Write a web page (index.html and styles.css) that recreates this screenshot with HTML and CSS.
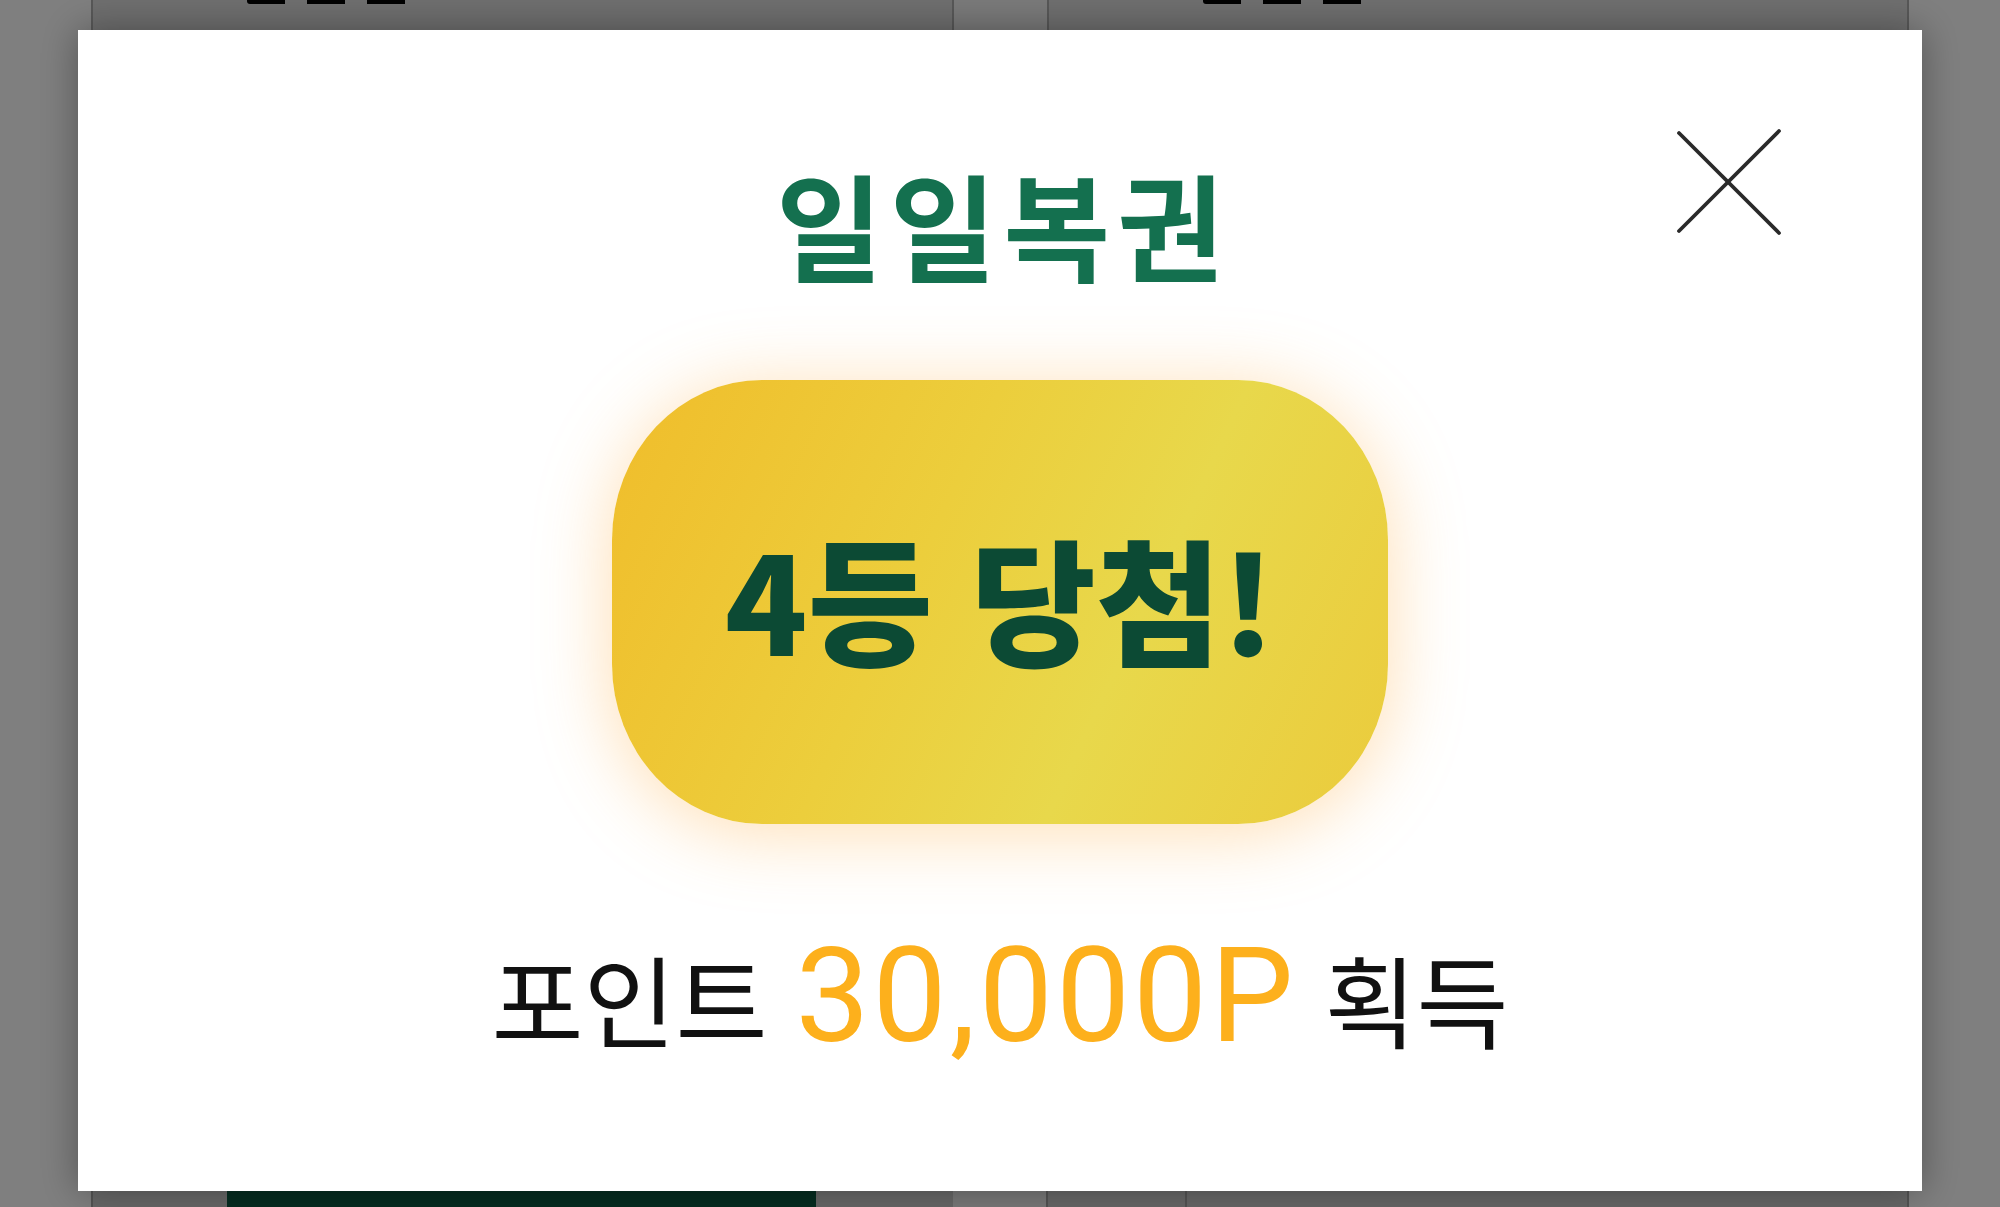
FILE: index.html
```html
<!DOCTYPE html>
<html lang="ko">
<head>
    <meta charset="UTF-8">
    <meta name="viewport" content="width=device-width, initial-scale=1.0">
    <title>일일복권</title>
    <link rel="stylesheet" href="styles.css">
</head>
<body>
    <main class="page">
        <div class="top-row">
            <div class="card"><div class="card-mark"></div></div>
            <div class="gap"></div>
            <div class="card"><div class="card-mark"></div></div>
        </div>
        <div class="spacer"></div>
        <div class="bottom-row">
            <div class="cell cell-left"></div>
            <div class="btn-green"></div>
            <div class="cell cell-mid"></div>
            <div class="gap"></div>
            <div class="cell cell-small"></div>
            <div class="cell cell-wide"></div>
        </div>
    </main>

    <div class="overlay"></div>

    <section class="modal">
        <button class="close-btn" aria-label="닫기">
            <svg width="110" height="110" viewBox="0 0 110 110">
                <line x1="5" y1="5" x2="105" y2="105" />
                <line x1="105" y1="3" x2="5" y2="103" />
            </svg>
        </button>
        <h2 class="modal-title">일일복권</h2>
        <div class="prize-badge">
            <span>4등 당첨!</span>
        </div>
        <p class="prize-text">포인트 <span class="points">30,000P</span> 획득</p>
    </section>
</body>
</html>
```

FILE: styles.css
```css
body {
    margin: 0;
    padding: 0;
    background-color: #fff;
    font-family: "Noto Sans CJK KR", "Noto Sans", sans-serif;
    color: #111;
    overflow: hidden;
}
.page {
    margin: 0 91px;
    height: 1207px;
    overflow: hidden;
    display: flex;
    flex-direction: column;
}
.top-row {
    display: flex;
    height: 30px;
}
.card {
    flex: 1;
    background-color: #dedede;
    border: 2px solid #b0b0b0;
    border-top: none;
    border-bottom: none;
    padding-left: 154px;
}
.card-mark {
    width: 166px;
    height: 4px;
    border-radius: 0 0 3px 3px;
    background: repeating-linear-gradient(90deg, #000 0 38px, transparent 38px 60px);
}
.gap {
    width: 93px;
    background-color: #f4f4f4;
}
.spacer {
    flex: 1;
}
.bottom-row {
    display: flex;
    height: 16px;
}
.cell {
    background-color: #d0d0d0;
    border-left: 2px solid #a8a8a8;
}
.cell-left { width: 134px; }
.btn-green {
    width: 589px;
    background-color: #0b5a42;
}
.cell-mid { width: 137px; border-left: none; }
.cell-small { width: 137px; }
.cell-wide { flex: 1; border-right: 2px solid #a8a8a8; }

.overlay {
    position: fixed;
    inset: 0;
    background-color: rgba(0, 0, 0, 0.5);
}
.modal {
    position: fixed;
    left: 78px;
    top: 30px;
    width: 1844px;
    height: 1161px;
    box-sizing: border-box;
    background-color: #fff;
    box-shadow: 0 0 36px rgba(0, 0, 0, 0.35);
    display: flex;
    flex-direction: column;
    align-items: center;
    padding-top: 134px;
}
.close-btn {
    position: absolute;
    top: 98px;
    right: 138px;
    width: 110px;
    height: 110px;
    padding: 0;
    border: none;
    background: none;
}
.close-btn line {
    stroke: #2a2a2a;
    stroke-width: 3.8;
    stroke-linecap: round;
}
.modal-title {
    margin: 0 0 0 7px;
    font-size: 116px;
    line-height: 1;
    font-weight: 700;
    letter-spacing: 7px;
    color: #14704f;
}
.prize-badge {
    margin-top: 100px;
    width: 776px;
    height: 444px;
    border-radius: 150px / 160px;
    background: linear-gradient(115deg, #f0bd2b 0%, #ecce3c 40%, #e8d84b 65%, #ebcb3c 100%);
    box-shadow: 0 8px 75px rgba(255, 172, 66, 0.4);
    display: flex;
    align-items: center;
    justify-content: center;
}
.prize-badge span {
    font-size: 136px;
    font-weight: 900;
    color: #0c4a34;
    line-height: 1;
    margin-top: -10px;
}
.prize-text {
    margin: 93px 0 0;
    font-size: 100px;
    line-height: 1.2;
    font-weight: 400;
    color: #111;
}
.points {
    font-family: Roboto, "Noto Sans", sans-serif;
    font-size: 132px;
    font-weight: 400;
    letter-spacing: 3px;
    color: #fdb01c;
}
```
